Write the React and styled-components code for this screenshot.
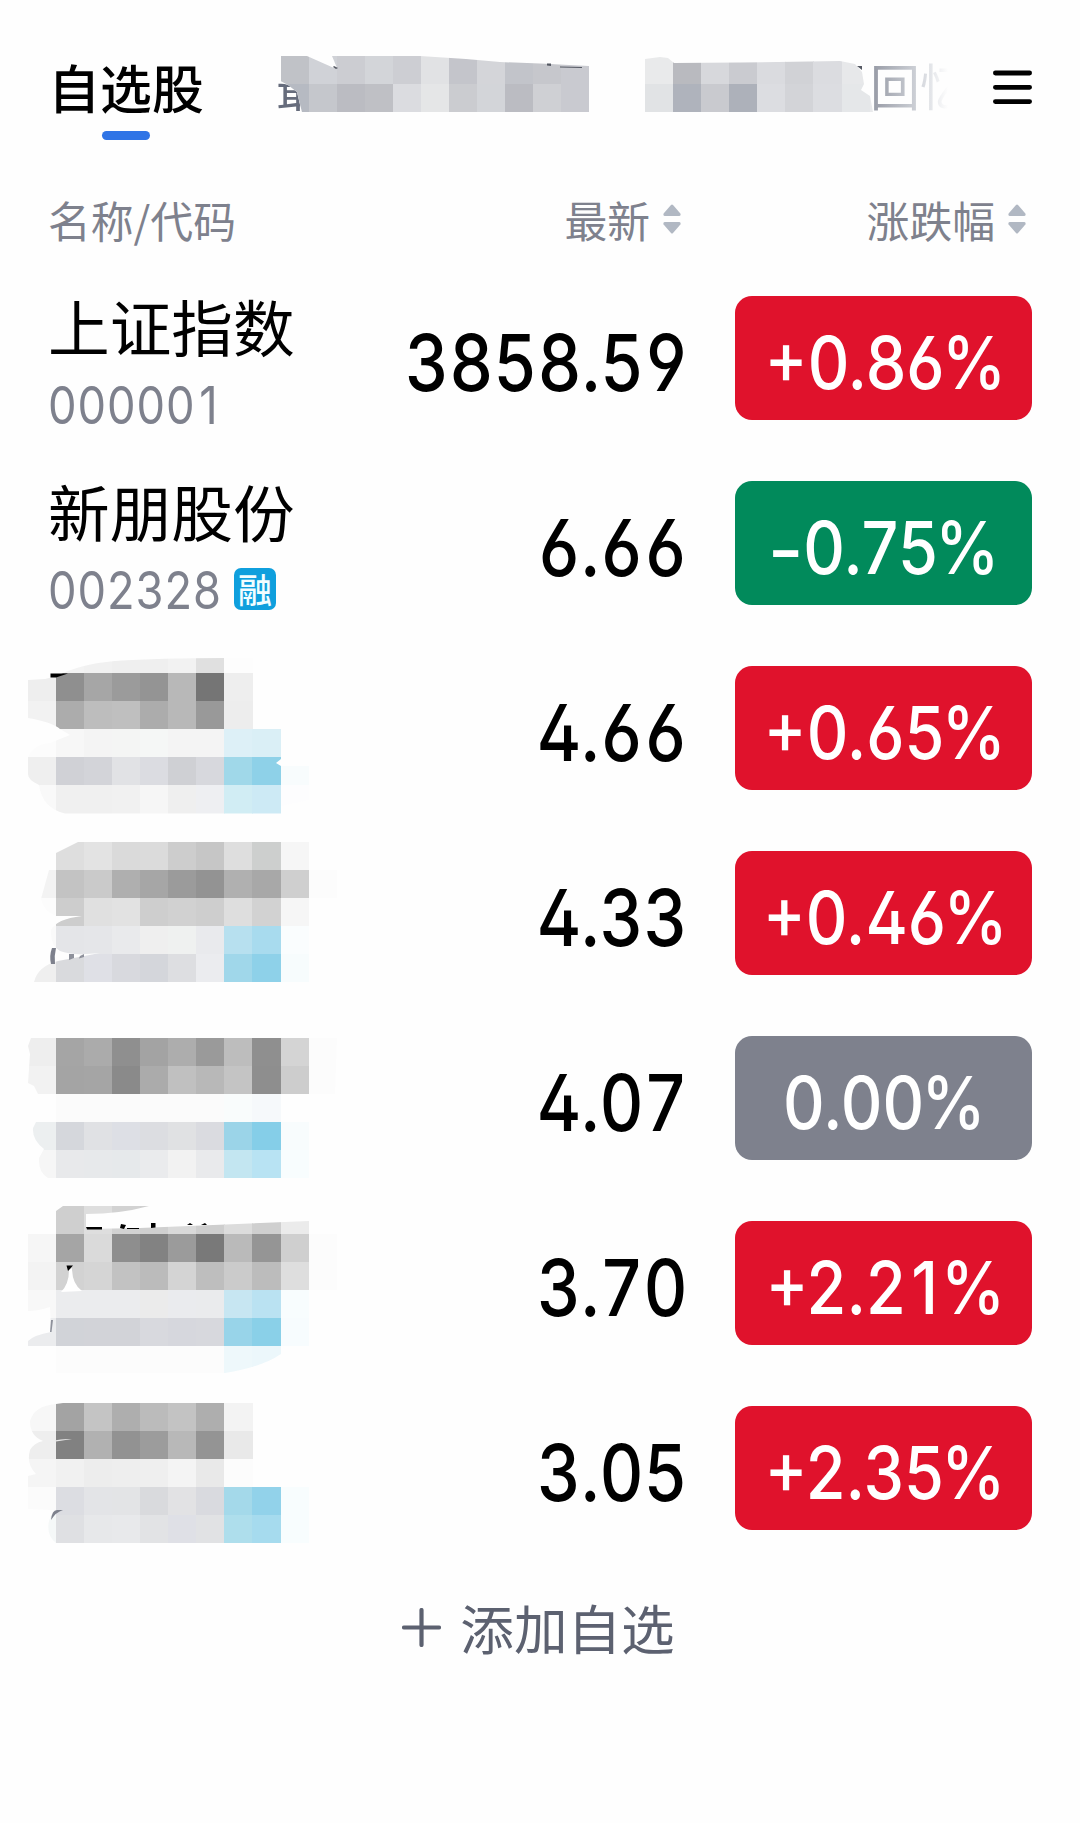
import React from "react";
import styled, { createGlobalStyle } from "styled-components";

const RED='#e0122c'
const GREEN='#018a5b'
const GRAY='#7e818d'

// side of one mosaic cell
const CELL=28.05
const LIST_TOP=265
const ROW_HEIGHT=185

const GlobalStyle = createGlobalStyle`
    body{
        margin:0;
        background:#fefefe;
        font-family:"Noto Sans CJK SC",sans-serif;
    }
`
const Page = styled.div`
    display:flex;
    flex-direction:column;
    width:1080px;
    height:1823px;
    overflow:hidden;
`
const Header = styled.header`
    display:flex;
    align-items:flex-start;
    box-sizing:border-box;
    height:180px;
    padding:50px 48px 0 50px;
`
const Tab = styled.div`
    display:flex;
    flex-direction:column;
    align-items:center;
    width:152px;
    font-size:51.8px;
    line-height:74px;
    font-weight:500;
    white-space:nowrap;
    color:#000;

    &::after{
        content:'';
        width:48px;
        height:9px;
        margin-top:7px;
        border-radius:5px;
        background:#2f74e6;
    }
`
const TabStrip = styled.div`
    position:relative;
    flex:1;
    display:flex;
    justify-content:space-between;
    height:74px;
    margin-left:74px;
    font-size:51px;
    line-height:70px;
    color:#666c7c;
`
const FadingTab = styled.span`
    width:104px;
    height:74px;
    margin-right:19px;
    font-size:50px;
    line-height:69px;
    white-space:nowrap;
    color:transparent;
    background:linear-gradient(90deg,#9498a3 0,#cdd0d6 46px,#e2e4e8 60px,#fefefe 78px);
    background-clip:text;
`
const StripMosaic = styled.svg`
    position:absolute;
    left:-6px;
    top:0;
`
const MenuButton = styled.svg`
    width:39px;
    height:34px;
    margin-top:20px;
`
const Columns = styled.div`
    display:grid;
    grid-template-columns:minmax(0,1fr) 280px 297px;
    column-gap:50px;
    align-items:center;
    padding:0 48px;
`
const HeadRow = styled(Columns)`
    align-items:start;
    height:85px;
    font-size:42.8px;
    line-height:62px;
    color:${GRAY};
`
const HeadCell = styled.div`
    display:flex;
    align-items:center;
    justify-content:${({$end})=>$end?'flex-end':'flex-start'};
    gap:13px;
    height:62px;
    margin-top:8px;
    padding-right:${({$inset})=>$inset ?? 0}px;
    white-space:nowrap;
`
const StockRow = styled(Columns)`
    height:${ROW_HEIGHT}px;
`
const NameCell = styled.div`
    display:flex;
    flex-direction:column;
    height:${ROW_HEIGHT}px;
    white-space:nowrap;
`
const StockName = styled.div`
    margin-top:16px;
    font-size:61.7px;
    line-height:88px;
    color:#000;
`
const CodeLine = styled.div`
    display:flex;
    align-items:center;
    gap:14px;
    height:66px;
    margin-top:2px;
`
const digits=`
    font-family:Inter,sans-serif;
    font-feature-settings:"cv02","cv03","cv04";
    white-space:nowrap;
`
const Code = styled.span`
    ${digits}
    width:172px;
    padding-top:3px;
    font-size:52px;
    line-height:60px;
    letter-spacing:1.1px;
    color:${GRAY};
    transform:scaleX(.87);
    transform-origin:0 50%;
`
// the digit 1 is narrower than the others, pad it to their width
const One = styled.span`
    padding:0 .085em;
`
const Badge = styled.span`
    display:flex;
    align-items:center;
    justify-content:center;
    width:42px;
    height:42px;
    border-radius:7px;
    font-size:34px;
    line-height:42px;
    font-weight:500;
    color:#f2fdff;
    background:#0f9fdd;
`
const Price = styled.div`
    ${digits}
    font-feature-settings:"cv02","cv03","cv04","tnum";
    justify-self:end;
    margin:9px -3px 0 0;
    font-size:79px;
    line-height:96px;
    font-weight:520;
    color:#000;
    transform:scaleX(.863);
    transform-origin:100% 50%;
`
const Change = styled.div`
    display:flex;
    align-items:center;
    justify-content:center;
    height:124px;
    border-radius:17px;
    color:#fff;
    background:${({$color})=>$color};
`
const ChangeText = styled.span`
    ${digits}
    padding:10px 0 0 3px;
    font-size:73px;
    line-height:90px;
    font-weight:550;
    transform:scaleX(.885);
`
// stretched hyphen, keeps the height of the digits' middle bar
const Minus = styled.span`
    display:inline-block;
    margin-right:3px;
    transform:translateY(2px) scaleX(1.2);
`
const Percent = styled.span`
    margin-left:-3px;
`
const RowMosaic = styled.svg`
    flex:none;
    width:400px;
    height:${ROW_HEIGHT}px;
    margin-left:-48px;
`
const AddButton = styled.div`
    display:flex;
    align-items:center;
    justify-content:center;
    gap:19px;
    height:77px;
    margin-top:29px;
    padding-right:3px;
    color:#5c6170;
`
const AddLabel = styled.span`
    margin-top:-3px;
    font-size:53.6px;
    line-height:77px;
`

// first: column index of the leftmost cell, line: row index of the top one
function Cells({first,line,lines}){
    return lines.map((colors,y)=>
        colors.split(' ').map((color,x)=>
            color!=='-' && <rect
                key={`${x}-${y}`}
                x={(first+x)*CELL}
                y={(line+y)*CELL}
                width={CELL+0.1}
                height={CELL+0.1}
                fill={'#'+color}
                shapeRendering="crispEdges"
            />
        )
    )
}

const mosaics=[
    {
        line:23,
        lines:[
            '- f3f3f3 f1f1f1 efefef efefef f2f2f2 e0e0e0 fdfdfd',
            'eeeeee 8f8f8f a6a6a6 9b9b9b 949494 b8b8b8 757575 eeeeee',
            'f2f2f2 acacac bdbdbd bfbfbf acacac b8b8b8 999999 ededed',
            'fcfcfc f7f7f7 f4f4f4 f4f5f4 f5f7f6 f4f4f4 f4f4f4 ddf0f7 daeff6',
            'efefef d0d1d6 d3d4d9 e1e2e5 dbdce1 cfd0d4 d7d8dd a0d8e9 8ed1e8 f8fcfd',
            'f9f9f9 f0f0f0 f0f0f0 f1f1f1 f6f6f6 efefef eeeff2 d1edf4 cdeaf5 fdfdfe',
        ],
        clip:'M28 680 L45 679 L57 676 Q80 664 115 661 Q160 658 224 658 L253 658 L253 729 L281 729 L281 759 L276 763 L281 766 L309 766 L309 800 L281 806 L281 813.5 L65 813.5 Q42 808 39 785 Q28 780 28 774 L28 757 Q34 744 50 743 L70 735 L60 729 Q52 722 28 718 Z',
        marks:[{d:'M50.5 673.5 H68 L56 677.5 H50.5 Z',fill:'#000'}],
    },
    {
        line:30,
        lines:[
            '- dedede e3e3e3 dadada dbdbdb cdcdcd c6c6c6 dedede cdcfce f6f6f6',
            'f3f3f3 c3c3c3 cacaca afafaf a6a6a6 9b9b9b 939393 b0b0b0 a8a8a8 cfcfcf fcfcfc',
            'fcfcfc cdcdcd e0e0e0 e2e2e2 cecece d1d1d1 cecece dedede d2d2d2 f6f6f6',
            'fafafa e4e5e8 e5e6e9 e9eaec efefef eff1f0 e9eaed b7e0ef a8dbee fafdfe',
            'efefef d9dadd dfe0e6 d8d9de d4d6db dddee1 ebecef a0d7ea 8ed1e9 f7fcfd',
        ],
        clip:'M56 853 L78 842 L309 842 L309 870 L337 870 L337 898 L309 898 L309 982 L34 982 Q38 966 58 961 L100 953 Q72 956 60 951 Q50 945 51 930 Q56 919 82 916 L56 916 Q44 912 41 899 L49 870 L56 870 Z',
        marks:[
            {d:'M52 948 Q49 956 51 964 H55 Q54 956 56 948 Z',fill:'#7e818d'},
            {d:'M69 954 H74 V958 L69 960 Z M80 956 L84 954 V957 L79 958.5 Z',fill:'#8e919b'},
        ],
    },
    {
        line:37,
        lines:[
            'eeeeee a5a5a5 ababab 8f8f8f a3a3a3 adadad 9a9a9a bdbdbd 8f8f8f d4d4d4 fcfcfc',
            'f2f2f2 a4a4a4 a5a5a5 8a8a8a ababab c0c0c0 b8b8b8 c4c4c4 8e8e8e cdcdcd fcfcfc',
            '- fbfbfb fbfbfb fbfbfb fbfbfb fbfbfb fbfbfb f9fcfc f6f9fb -',
            'eceff0 d5d7dc e0e1e4 dddfe5 dcdde1 e0e1e3 dadbe0 9bd4e8 85cee8 f8fcfd',
            'f6f6f6 e8e9eb e7e9eb e6e9eb eaebed f2f2f2 e9eaec c3e6f1 b8e3f3 f8fdfe',
        ],
        clip:'M31 1038 L337 1038 L335 1094 L309 1094 L309 1178 L48 1178 Q38 1172 39 1158 L44 1149 Q32 1140 33 1128 L36 1122 L56 1122 L56 1094 L38 1094 L34 1086 L28 1083 L30 1054 L28 1046 Z',
    },
    {
        line:43,
        lines:[
            '- cfcfcf dedede d2d2d2 cfcfcf d9d9d9 cecece dcdcdc cfcfcf ebebeb',
            'f6f6f6 a5a5a5 dadada 8e8e8e 828282 9b9b9b 797979 bababa 959595 cfcfcf fcfcfc',
            'f3f3f3 d2d2d2 d5d5d5 c2c2c2 bbbbbb d4d4d4 bebebe cbcbcb bcbcbc dedede fcfcfc',
            'f8f8f8 ebecee ebecee ebecee ebebeb eaebee eaebed c7e6f2 bae2f2 f8fdfe',
            'ebecee d1d3d8 d2d3d8 d2d3d8 d8d9de d6d7dd d7d8dd 98d4e9 8ad0e8 f7fcfe',
            '- fcfcfc fcfcfc fcfcfc fcfcfc fcfcfc fcfcfc eef8fb ecf7fb',
        ],
        clip:'M56 1211 L63 1206 L149 1206 Q120 1214 86 1214 L86 1229 L140 1228 L309 1221 L309 1234 L337 1234 L337 1290 L309 1290 L309 1346 L281 1346 L281 1354 Q262 1367 225 1373 L56 1373 L56 1346 L28 1346 L28 1341 Q34 1335 51 1332 L50 1307 Q38 1311 28 1311 L28 1234 L56 1234 Z',
        marks:[
            {d:'M61 1292 Q69 1284 69 1270 L72 1268 Q72 1284 82 1291 Z',fill:'#fff'},
            {d:'M86 1227 H102 V1229.5 H87 Z M121 1224 L126 1225 L124 1229 L120 1228 Z M151 1223 H155.5 V1227.5 L151 1228 Z M127 1228 H139 V1229 H127 Z M187 1225 L190 1223 L193 1225 Z M201 1225 L205 1223 L207 1225 Z M66.5 1265.5 H73 L68 1271 Z',fill:'#000'},
            {d:'M51 1320 H53 L51.5 1332 H50 Z',fill:'#8e919b'},
        ],
    },
    {
        line:50,
        lines:[
            'f7f7f7 a3a3a3 c4c4c4 aeaeae bbbbbb c3c3c3 aeaeae f3f3f3',
            'eeeeee 818181 b1b1b1 929292 9c9c9c b8b8b8 949494 e9e9e9',
            'f5f5f5 f1f1f1 ededed eeeeee efefef f4f4f4 e9e9e9 fcfcfc',
            'fbfbfb dcdde2 e3e4e7 e3e4e6 d9dadd e2e2e4 d9dadf a4d9ea 92d2ea f8fdfe',
            'f5f8f8 dfe0e3 e7e8ea e8e9eb e2e3e5 dfe0e6 e1e2e4 aedeec a6dbee f8fdfe',
        ],
        clip:'M56 1404 L70 1402 L253 1402 L253 1487 L309 1487 L309 1543 L56 1543 Q46 1535 49 1521 L53 1510 L28 1509 L28 1476 L36 1474 Q26 1464 30 1450 Q34 1443 43 1441 Q30 1436 30 1421 Q34 1406 56 1404 Z',
        marks:[
            {d:'M51 1520 Q52 1510 57 1510 H63 Q56 1512 51 1520 Z',fill:'#7e818d'},
            {d:'M54 1440.5 Q62 1438.5 72 1439 L56 1441.5 Z',fill:'#e8e8e8'},
        ],
    },
]

const stocks=[
    {name:'上证指数',code:'000001',price:'3858.59',change:'+0.86%',color:RED},
    {name:'新朋股份',code:'002328',badge:'融',price:'6.66',change:'-0.75%',color:GREEN},
    {mosaic:mosaics[0],price:'4.66',change:'+0.65%',color:RED},
    {mosaic:mosaics[1],price:'4.33',change:'+0.46%',color:RED},
    {mosaic:mosaics[2],price:'4.07',change:'0.00%',color:GRAY},
    {mosaic:mosaics[3],price:'3.70',change:'+2.21%',color:RED},
    {mosaic:mosaics[4],price:'3.05',change:'+2.35%',color:RED},
]

const stripLines=[
    'c0c2c7 d0d2d7 cccdd2 d3d5d9 cdced3 e1e2e4 c4c5cb d4d5d9 c2c4ca c6c7cc c9cad0 - - e9eaeb b9babf d7d8dc cacbd0 dadbdf d1d2d6 dbdce0 e7e8ea e9eaec',
    'b6bac2 c5c7cc bbbcc2 bfc0c5 dbdce0 e5e6e7 cbccd0 d3d5d9 bbbcc2 cfd0d4 c9cad0 - - e1e3e5 afb3bc c9cacf adb1ba dcdde1 d3d4d8 dcdde1 e5e7e9 e9eaec',
]

const wrappers={'1':One,'-':Minus,'%':Percent}

function wrapDigits(text){
    return text.split(/([1%-])/).map((part,i)=>{
        const Wrapper=wrappers[part]
        return Wrapper?<Wrapper key={i}>{part}</Wrapper>:part
    })
}

function SortIcon(){
    return <svg width="18" height="30" viewBox="0 0 18 30" fill="#b1b8c3">
        <path d="M8 1 Q9 0 10 1 L17.4 9.6 Q18.2 11.8 16.4 12 H1.6 Q-.2 11.8 .6 9.6 Z"/>
        <path d="M8 29 Q9 30 10 29 L17.4 20.4 Q18.2 18.2 16.4 18 H1.6 Q-.2 18.2 .6 20.4 Z"/>
    </svg>
}

function Mosaic({id,top,mosaic}){
    return <RowMosaic viewBox={`0 ${top} 400 ${ROW_HEIGHT}`} overflow="visible">
        <clipPath id={id}><path d={mosaic.clip}/></clipPath>
        <g clipPath={`url(#${id})`}>
            <Cells first={1} line={mosaic.line} lines={mosaic.lines}/>
        </g>
        {mosaic.marks?.map((mark,i)=><path key={i} {...mark}/>)}
    </RowMosaic>
}

function Stock({stock,index}){
    return <StockRow>
        <NameCell>
            {
                stock.mosaic
                ? <Mosaic id={`brush${index}`} top={LIST_TOP+index*ROW_HEIGHT} mosaic={stock.mosaic}/>
                : <>
                    <StockName>{stock.name}</StockName>
                    <CodeLine>
                        <Code>{wrapDigits(stock.code)}</Code>
                        {stock.badge && <Badge>{stock.badge}</Badge>}
                    </CodeLine>
                </>
            }
        </NameCell>
        <Price>{stock.price}</Price>
        <Change $color={stock.color}><ChangeText>{wrapDigits(stock.change)}</ChangeText></Change>
    </StockRow>
}

export default function App(){
    return <Page>
        <GlobalStyle/>
        <Header>
            <Tab>自选股</Tab>
            <TabStrip>
                <span>最</span>
                <FadingTab>回忆</FadingTab>
                <StripMosaic width="620" height="74" viewBox="270 50 620 74">
                    <clipPath id="strip">
                        <path d="M280.6 56 H307 L334 68 L337 68 L332 56 H420 L466 59 L500 62 L540 63.5 L589 66 V112.2 H302 L297 92 L288 85 L280.6 81 Z"/>
                        <path d="M645 59 L660 57 L668 58 L674 63 L740 62.5 L840 61 L855 64 L862 72 L864 84 L861 90 L870 96 L873 112.2 H645 Z"/>
                    </clipPath>
                    <path fill="#fefefe" d="M274 50 H340 V122 H304 L297 92 L288 85 L274 81 Z"/>
                    <g clipPath="url(#strip)">
                        <Cells first={10} line={2} lines={stripLines}/>
                    </g>
                    <path fill="#555963" d="M334 66 L338 68 L336 69 L333 67 Z M547 63.5 H551 V66 L547 65.5 Z M560 66.5 L582 67 V68 L560 67.5 Z M857 66 H862 V70 Z"/>
                </StripMosaic>
            </TabStrip>
            <MenuButton viewBox="0 0 39 34" stroke="#000" strokeWidth="4.8" strokeLinecap="round">
                <path d="M2.4 3 H36.6 M2.4 17.3 H36.6 M2.4 31.6 H36.6"/>
            </MenuButton>
        </Header>
        <HeadRow>
            <HeadCell>名称/代码</HeadCell>
            <HeadCell $end $inset={4}>最新<SortIcon/></HeadCell>
            <HeadCell $end $inset={6}>涨跌幅<SortIcon/></HeadCell>
        </HeadRow>
        {stocks.map((stock,i)=><Stock key={i} stock={stock} index={i}/>)}
        <AddButton>
            <svg width="39" height="39" viewBox="0 0 39 39" stroke="#5c6170" strokeWidth="4.2" strokeLinecap="round">
                <path d="M2 19.5 H37 M19.5 2 V37"/>
            </svg>
            <AddLabel>添加自选</AddLabel>
        </AddButton>
    </Page>
}
